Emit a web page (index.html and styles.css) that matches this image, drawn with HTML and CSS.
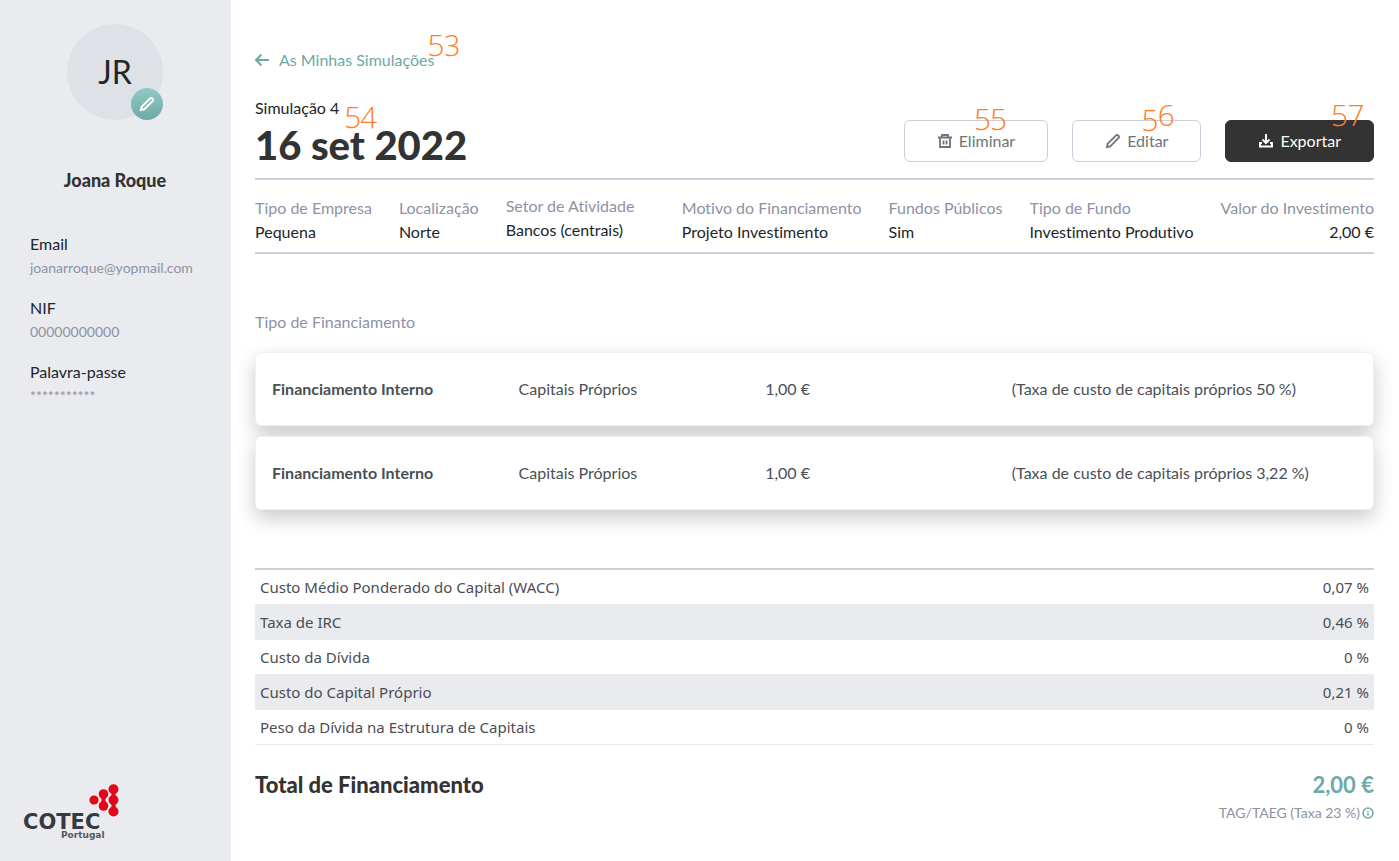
FILE: index.html
```html
<!DOCTYPE html>
<html lang="pt">
<head>
<meta charset="utf-8">
<meta name="viewport" content="width=device-width, initial-scale=1">
<title>As Minhas Simulações</title>
<link rel="stylesheet" href="styles.css">
</head>
<body>
<div class="app">
  <aside class="sidebar">
    <div class="avatar">JR
      <button class="avatar-edit" type="button" aria-label="Editar perfil">
        <svg class="icon" viewBox="0 0 16 16"><path d="M2 14l.7-3.300 8.100-8.100a1.800 1.800 0 0 1 2.600 2.600l-8.100 8.100z"/></svg>
      </button>
    </div>
    <h2 class="user-name">Joana Roque</h2>
    <dl class="profile">
      <div><dt>Email</dt><dd>joanarroque@yopmail.com</dd></div>
      <div><dt>NIF</dt><dd>00000000000</dd></div>
      <div><dt>Palavra-passe</dt><dd>***********</dd></div>
    </dl>
    <svg class="logo" viewBox="0 0 96 54" role="img" aria-label="COTEC Portugal">
      <g class="logo-mark">
        <circle cx="70" cy="15" r="4.600"/>
        <circle cx="79.500" cy="9" r="4.800"/><circle cx="79.500" cy="21" r="4.800"/>
        <path d="M76 10q3 5 0 10h7q-3-5 0-10z"/>
        <circle cx="89.500" cy="4.300" r="5"/><circle cx="89.500" cy="15" r="5"/><circle cx="89.500" cy="26.500" r="5"/>
        <path d="M86 5q3 5 0 10q3 6 0 11h7q-3-5 0-11q-3-5 0-10z"/>
      </g>
      <text class="logo-name" x="-1" y="44">COTEC</text>
      <text class="logo-country" x="37" y="53">Portugal</text>
    </svg>
  </aside>

  <main class="main">
    <a class="back" href="#">
      <svg class="icon back-icon" viewBox="0 0 14 14"><path d="M14 7H1.500M6.500 1.500L1 7l5.500 5.500"/></svg>
      As Minhas Simulações
      <span class="mark mark-back">53</span>
    </a>

    <header class="heading">
      <div class="title">
        <p>Simulação 4</p>
        <h1>16 set 2022</h1>
        <span class="mark mark-title">54</span>
      </div>
      <div class="actions">
        <button class="btn" type="button">
          <svg class="icon btn-icon" viewBox="0 0 16 16"><path d="M1 4.500h14M5 4.500V2h6v2.500M3 5v9h10V5M6.500 7.500v4M9.500 7.500v4"/></svg>
          Eliminar
          <span class="mark mark-delete">55</span>
        </button>
        <button class="btn" type="button">
          <svg class="icon btn-icon" viewBox="0 0 16 16"><path d="M2 14l.7-3.300 8.100-8.100a1.800 1.800 0 0 1 2.600 2.600l-8.100 8.100z"/></svg>
          Editar
          <span class="mark mark-edit">56</span>
        </button>
        <button class="btn btn-dark" type="button">
          <svg class="icon" viewBox="0 0 16 16"><path d="M8 1v8.500M4.500 6.500L8 10l3.500-3.500M4 10H2v3.500h12V10h-2"/></svg>
          Exportar
          <span class="mark mark-export">57</span>
        </button>
      </div>
    </header>

    <dl class="facts">
      <div><dt>Tipo de Empresa</dt><dd>Pequena</dd></div>
      <div><dt>Localização</dt><dd>Norte</dd></div>
      <div class="sector"><dt>Setor de Atividade</dt><dd>Bancos (centrais)</dd></div>
      <div><dt>Motivo do Financiamento</dt><dd>Projeto Investimento</dd></div>
      <div><dt>Fundos Públicos</dt><dd>Sim</dd></div>
      <div><dt>Tipo de Fundo</dt><dd>Investimento Produtivo</dd></div>
      <div class="amount"><dt>Valor do Investimento</dt><dd>2,00 €</dd></div>
    </dl>

    <section class="funding">
      <h2>Tipo de Financiamento</h2>
      <div class="card"><strong>Financiamento Interno</strong><span>Capitais Próprios</span><span>1,00 €</span><span>(Taxa de custo de capitais próprios 50 %)</span></div>
      <div class="card"><strong>Financiamento Interno</strong><span>Capitais Próprios</span><span>1,00 €</span><span>(Taxa de custo de capitais próprios 3,22 %)</span></div>
    </section>

    <table class="rates">
      <tbody>
        <tr><th scope="row">Custo Médio Ponderado do Capital (WACC)</th><td>0,07 %</td></tr>
        <tr><th scope="row">Taxa de IRC</th><td>0,46 %</td></tr>
        <tr><th scope="row">Custo da Dívida</th><td>0 %</td></tr>
        <tr><th scope="row">Custo do Capital Próprio</th><td>0,21 %</td></tr>
        <tr><th scope="row">Peso da Dívida na Estrutura de Capitais</th><td>0 %</td></tr>
      </tbody>
    </table>

    <footer class="total">
      <h2>Total de Financiamento</h2>
      <div class="total-value">
        <strong>2,00 €</strong>
        <span class="rate-note">TAG/TAEG (Taxa 23 %)
          <svg class="icon info-icon" viewBox="0 0 12 12"><circle cx="6" cy="6" r="5"/><path d="M6 5.200v3.500M6 3.200v1"/></svg>
        </span>
      </div>
    </footer>
  </main>
</div>
</body>
</html>
```
FILE: styles.css
```css
* { box-sizing: border-box; }

body {
  margin: 0;
  background: #fff;
  color: #212529;
  font: 16px/24px Lato, sans-serif;
  font-variant-ligatures: none;
}

h1, h2, p, dl, dd { margin: 0; }

.app { display: flex; min-height: 100vh; }

/* Sidebar */
.sidebar {
  flex: 0 0 231px;
  display: flex;
  flex-direction: column;
  padding: 24px 25px 22px 24px;
  background: #e9ebef;
}

.avatar {
  position: relative;
  display: flex;
  align-items: center;
  justify-content: center;
  align-self: center;
  width: 96px;
  height: 96px;
  border-radius: 50%;
  background: #dee2e6;
  font-size: 32px;
}

.avatar-edit {
  position: absolute;
  right: 0;
  bottom: 0;
  display: flex;
  align-items: center;
  justify-content: center;
  width: 32px;
  height: 32px;
  padding: 0;
  border: 0;
  border-radius: 50%;
  background: linear-gradient(#8fcac6, #6da9a6);
  color: #fff;
}

.user-name {
  margin: 48px 0 40px;
  color: #333;
  font-size: 18px;
  font-weight: 900;
  line-height: 24px;
  text-align: center;
}

.profile { display: grid; gap: 16px; padding-left: 6px; }
.profile dd { color: #8d92a5; font-size: 14px; }

.logo { width: 96px; height: 54px; margin-top: auto; overflow: visible; }
.logo-mark { fill: #e2061b; }
.logo-name { fill: #363942; font: bold 21px "DejaVu Sans", sans-serif; }
.logo-country { fill: #54565d; font: bold 9px "DejaVu Sans", sans-serif; }

.icon {
  flex: none;
  width: 16px;
  height: 16px;
  fill: none;
  stroke: currentColor;
  stroke-width: 2;
}

/* Main column */
.main { flex: 1; min-width: 0; padding: 48px 25px 24px 24px; }

.back {
  position: relative;
  display: flex;
  align-items: center;
  gap: 10px;
  width: fit-content;
  color: #6da9a6;
  text-decoration: none;
}
.back-icon { width: 14px; height: 14px; }

.heading {
  display: flex;
  justify-content: space-between;
  align-items: flex-end;
  margin-top: 24px;
  padding-bottom: 8px;
  border-bottom: 2px solid #cbcedb;
}
.title { position: relative; }
.title h1 { color: #333; font-size: 40px; line-height: 50px; font-weight: 900; }

.actions { display: flex; gap: 24px; margin-bottom: 8px; }
.btn {
  position: relative;
  display: flex;
  align-items: center;
  gap: 6px;
  padding: 8px 32px;
  border: 1px solid #cbcedb;
  border-radius: 6px;
  background: #fff;
  color: #6c757d;
  font: inherit;
}
.btn-icon { stroke-width: 1.8; }
.btn-dark { border-color: #333; background: #333; color: #fff; }

/* Numbered markers laid over the controls */
.mark {
  position: absolute;
  color: #ff7f27;
  font: 300 30px/28px "Open Sans", sans-serif;
  font-variant-numeric: oldstyle-nums;
}
.mark-back { right: -26px; top: -22px; }
.mark-title { left: 90px; top: 2px; }
.mark-delete { left: 70px; top: -21px; }
.mark-edit { left: 69px; top: -20px; }
.mark-export { right: 9px; top: -25px; }

.facts {
  display: flex;
  justify-content: space-between;
  align-items: center;
  padding: 14px 0 6px;
  border-bottom: 2px solid #cbcedb;
}
.facts dt { color: #8d92a5; }
.sector { min-width: 149px; padding-bottom: 4px; }
.amount { text-align: right; }

.funding { display: grid; gap: 10px; margin-top: 56px; }
.funding h2 { margin-bottom: 8px; color: #8d92a5; font-size: 16px; font-weight: 400; }

.card {
  display: grid;
  grid-template-columns: 5fr 5fr 5fr 7fr;
  padding: 24px 16px;
  border: 1px solid #f0f0f0;
  border-radius: 6px;
  background: #fff;
  box-shadow: 0 8px 20px rgba(0, 0, 0, .21);
  color: #495057;
}

.rates {
  width: 100%;
  margin-top: 58px;
  border-top: 2px solid #cbcedb;
  border-spacing: 0;
  color: #4b4d55;
  font-family: "Noto Sans", sans-serif;
  font-size: 15px;
}
.rates th, .rates td {
  padding: 5px;
  border-bottom: 1px solid #e9ebef;
  font-weight: 400;
  text-align: left;
}
.rates td { text-align: right; }
.rates tr:nth-child(even) { background: #e9ebef; }

.total { display: flex; justify-content: space-between; margin-top: 24px; }
.total h2 { color: #333; font-size: 22px; line-height: 32px; font-weight: 900; }
.total-value { display: flex; flex-direction: column; align-items: flex-end; }
.total-value strong { color: #6da9a6; font-size: 22px; line-height: 32px; }
.rate-note { display: flex; align-items: center; gap: 2px; color: #8d92a5; font-size: 14px; }
.info-icon { width: 12px; height: 12px; color: #6da9a6; stroke-width: 1.5; }
```
